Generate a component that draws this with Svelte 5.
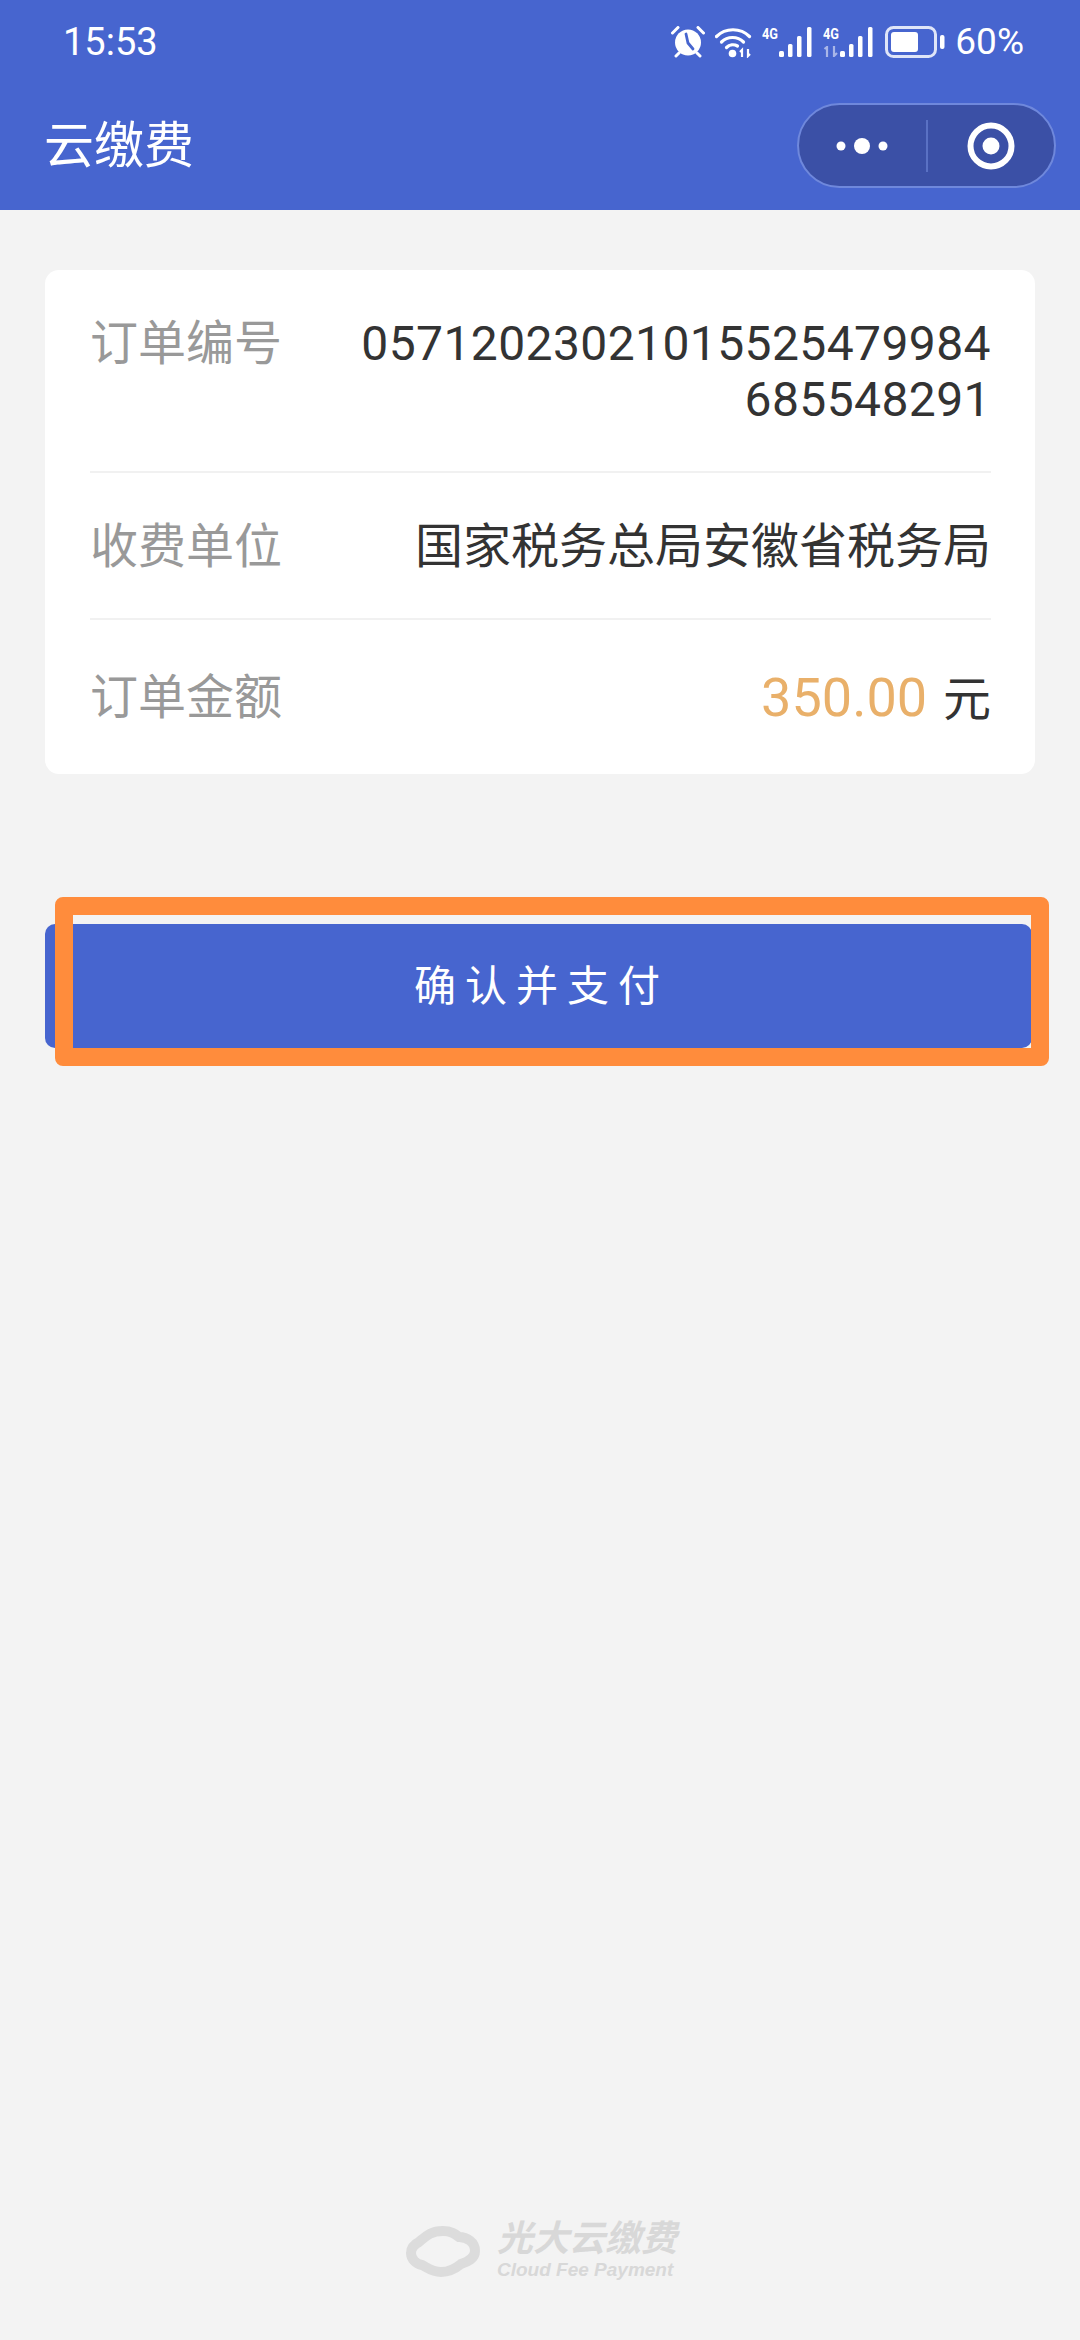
<script>
  const rows = [
    { label: "订单编号", value: "05712023021015525479984685548291", digits: true },
    { label: "收费单位", value: "国家税务总局安徽省税务局", digits: false },
  ];
</script>

<div class="page">
  <header class="top">
    <div class="status">
      <span class="time">15:53</span>
      <div class="status-icons">
        <svg class="alarm" width="34" height="32" viewBox="0 0 34 32" aria-hidden="true">
          <circle cx="17" cy="16.500" r="13" fill="#fff"></circle>
          <path d="M15 8l2 9 5 6" fill="none" stroke="#4765cf" stroke-width="2.800" stroke-linecap="round"></path>
          <path d="M1.500 7 7 1.500M32.500 7 27 1.500M5 30l3-3M29 30l-3-3" stroke="#fff" stroke-width="3" stroke-linecap="round"></path>
        </svg>
        <svg class="wifi" width="37" height="32" viewBox="0 0 37 32" aria-hidden="true">
          <g fill="none" stroke="#fff" stroke-width="3.200" stroke-linecap="round">
            <path d="M1.500 10.500C10.500 1.500 25.500 1.500 34.500 10.500"></path>
            <path d="M6.500 16C12.500 10 22.500 10 28.500 16"></path>
            <path d="M11.500 21.500C14.500 18.500 19 18 22.500 20"></path>
          </g>
          <circle cx="17.500" cy="27.500" r="3.800" fill="#fff"></circle>
          <path d="M27 31v-7l-2 2M33 23v7l2-2" fill="none" stroke="#fff" stroke-width="2.200"></path>
        </svg>
        <div class="signal">
          <span class="net">4G</span>
          <svg width="33" height="30" viewBox="0 0 33 30" aria-hidden="true">
            <g fill="#fff">
              <rect x="0" y="24" width="5" height="6" rx="1.500"></rect>
              <rect x="9" y="17" width="4.500" height="13" rx="1.500"></rect>
              <rect x="18" y="9" width="4.500" height="21" rx="1.500"></rect>
              <rect x="28" y="0" width="4.500" height="30" rx="1.500"></rect>
            </g>
          </svg>
        </div>
        <div class="signal second">
          <span class="net">4G</span>
          <svg class="updown" width="16" height="11" viewBox="0 0 16 11" aria-hidden="true">
            <path d="M4 11V1L1.500 3M11 0v10l3-3" fill="none" stroke="#a9b6e8" stroke-width="2.200"></path>
          </svg>
          <svg width="33" height="30" viewBox="0 0 33 30" aria-hidden="true">
            <g fill="#fff">
              <rect x="0" y="24" width="5" height="6" rx="1.500"></rect>
              <rect x="9" y="17" width="4.500" height="13" rx="1.500"></rect>
              <rect x="18" y="9" width="4.500" height="21" rx="1.500"></rect>
              <rect x="28" y="0" width="4.500" height="30" rx="1.500"></rect>
            </g>
          </svg>
        </div>
        <svg class="battery" width="60" height="32" viewBox="0 0 60 32" aria-hidden="true">
          <rect x="1.500" y="1.500" width="49" height="29" rx="7" fill="none" stroke="#dfe5f8" stroke-width="3"></rect>
          <rect x="6" y="6" width="27" height="20" rx="3" fill="#fff"></rect>
          <rect x="55" y="9" width="4.500" height="14" rx="2" fill="#fff"></rect>
        </svg>
        <span class="pct">60%</span>
      </div>
    </div>
    <div class="nav">
      <span class="title">云缴费</span>
      <div class="capsule">
        <div class="capsule-part">
          <svg width="52" height="18" viewBox="0 0 52 18" aria-hidden="true">
            <circle cx="5" cy="9" r="4.500" fill="#fff"></circle>
            <circle cx="26" cy="9" r="8" fill="#fff"></circle>
            <circle cx="47" cy="9" r="4.500" fill="#fff"></circle>
          </svg>
        </div>
        <span class="capsule-line"></span>
        <div class="capsule-part">
          <svg width="48" height="48" viewBox="0 0 48 48" aria-hidden="true">
            <circle cx="24" cy="24" r="20.500" fill="none" stroke="#fff" stroke-width="6"></circle>
            <circle cx="24" cy="24" r="8.500" fill="#fff"></circle>
          </svg>
        </div>
      </div>
    </div>
  </header>

  <main class="content">
    <section class="card">
      {#each rows as row}
        <div class="row">
          <span class="label">{row.label}</span>
          <span class="value" class:digits={row.digits}>{row.value}</span>
        </div>
      {/each}
      <div class="row last">
        <span class="label">订单金额</span>
        <span class="value"><span class="amount">350.00</span> 元</span>
      </div>
    </section>

    <div class="pay-wrap">
      <button type="button" class="pay">确认并支付</button>
      <span class="mark"></span>
    </div>
  </main>

  <footer class="brand">
    <svg width="76" height="56" viewBox="0 0 76 56" aria-hidden="true">
      <path d="M14 19C20 14 25 8 38 8C46 8 50 11 54 14C62 14 70 19 70 28C70 36 62 39 56 41C50 46 44 49 36 49C27 49 23 45 17 42C11 41 6 36 6 30C6 24 10 21 14 19Z" fill="none" stroke="#dcdcdc" stroke-width="10"></path>
    </svg>
    <div class="brand-text">
      <span class="brand-cn">光大云缴费</span>
      <span class="brand-en">Cloud Fee Payment</span>
    </div>
  </footer>
</div>

<style>
  :global(body) {
    margin: 0;
    background: #f3f3f3;
  }

  .page {
    display: flex;
    flex-direction: column;
    height: 2340px;
    overflow: hidden;
    background: #f3f3f3;
    font-family: Roboto, "Noto Sans CJK SC", sans-serif;
    color: #333;
  }

  .top {
    height: 210px;
    background: #4765cf;
    color: #fff;
  }

  .status {
    display: flex;
    justify-content: space-between;
    align-items: center;
    height: 84px;
    padding: 0 56px 0 63px;
  }

  .time {
    font-size: 38px;
    font-weight: 400;
  }

  .status-icons {
    display: flex;
    align-items: center;
    gap: 10px;
  }

  .signal {
    position: relative;
    display: flex;
    align-items: flex-end;
    height: 30px;
    padding-left: 17px;
  }

  .second {
    margin-left: 1px;
  }

  .net {
    position: absolute;
    left: 0;
    top: -2px;
    font-size: 15px;
    font-weight: 700;
    line-height: 18px;
    transform: scaleX(0.85);
    transform-origin: left;
  }

  .updown {
    position: absolute;
    left: 0;
    bottom: 0;
  }

  .battery {
    margin-left: 2px;
  }

  .pct {
    font-size: 37px;
    font-weight: 400;
    line-height: 32px;
  }

  .nav {
    display: flex;
    justify-content: space-between;
    align-items: center;
    height: 85px;
    margin-top: 19px;
    padding: 0 24px 0 44px;
  }

  .title {
    font-size: 50px;
    line-height: 60px;
  }

  .capsule {
    display: flex;
    align-items: center;
    box-sizing: border-box;
    width: 259px;
    height: 85px;
    border: 2px solid #6f88dc;
    border-radius: 43px;
    background: #3b50a6;
  }

  .capsule-part {
    display: flex;
    flex: 1;
    justify-content: center;
    align-items: center;
  }

  .capsule-line {
    width: 2px;
    height: 52px;
    background: #5a71c4;
  }

  .content {
    padding: 60px 45px 0;
  }

  .card {
    padding: 0 44px 0 45px;
    border-radius: 14px;
    background: #fff;
  }

  .row {
    display: flex;
    justify-content: space-between;
    gap: 52px;
    padding: 46px 0 43px;
    border-bottom: 2px solid #f1f1f1;
    font-size: 48px;
    line-height: 56px;
  }

  .row.last {
    padding: 50px 0 46px;
    border-bottom: none;
  }

  .label {
    flex: none;
    color: #999;
  }

  .value {
    min-width: 0;
    max-width: 640px;
    overflow-wrap: anywhere;
    text-align: right;
  }

  .digits {
    letter-spacing: 0.4px;
  }

  .amount {
    color: #e9b06a;
    font-size: 54px;
    line-height: 56px;
    margin-right: 4px;
  }

  .pay-wrap {
    position: relative;
    margin-top: 150px;
  }

  .pay {
    display: block;
    width: 987px;
    height: 124px;
    padding: 0 0 8px 6px;
    border: none;
    border-radius: 10px;
    background: #4765cf;
    color: #fff;
    font-family: inherit;
    font-size: 42px;
    letter-spacing: 9px;
  }

  .mark {
    position: absolute;
    left: 10px;
    top: -27px;
    box-sizing: border-box;
    width: 994px;
    height: 169px;
    border: 18px solid #ff8c3c;
    border-radius: 8px;
  }

  .brand {
    display: flex;
    justify-content: center;
    align-items: center;
    gap: 16px;
    margin-top: auto;
    padding: 0 0 58px 2px;
    color: #d8d8d8;
  }

  .brand-text {
    display: flex;
    flex-direction: column;
    font-style: italic;
    font-weight: 700;
  }

  .brand-cn {
    font-size: 36px;
    line-height: 38px;
  }

  .brand-en {
    font-family: "Liberation Sans", sans-serif;
    font-size: 19px;
    line-height: 24px;
  }
</style>
